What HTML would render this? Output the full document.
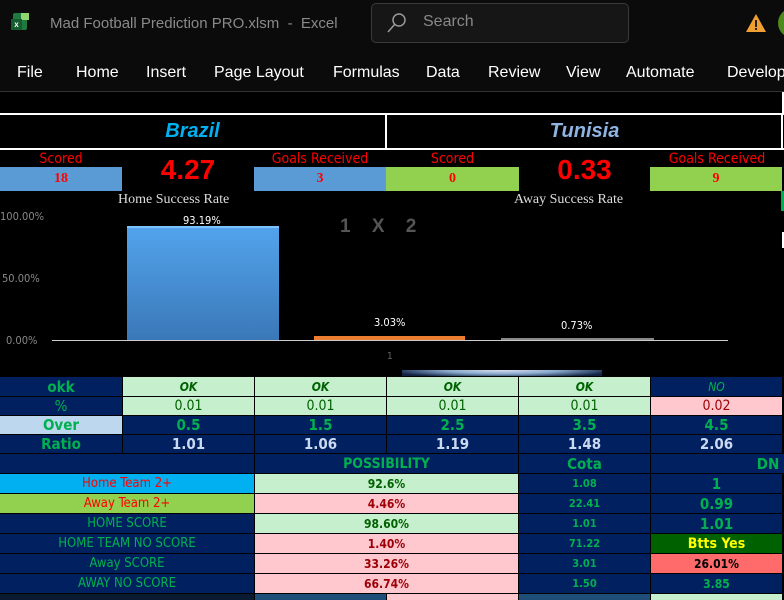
<!DOCTYPE html>
<html><head><style>
*{margin:0;padding:0;box-sizing:border-box}
body{width:784px;height:600px;background:#000;position:relative;overflow:hidden;font-family:"Liberation Sans",sans-serif}
.a{position:absolute}
.c{position:absolute;display:flex;align-items:center;justify-content:center;white-space:nowrap}
.n{font-family:"DejaVu Sans Condensed","Liberation Sans",sans-serif;font-stretch:condensed}
</style></head><body>
<div class="a" style="left:0;top:0;width:784px;height:92px;background:#0b0b0b"></div>
<div class="a" style="left:13px;top:13px;width:14px;height:17px;background:#1e7a3e;border-radius:2px"></div>
<div class="a" style="left:21px;top:13px;width:8px;height:7px;background:#8fd46e"></div>
<div class="c" style="left:11px;top:19px;width:11px;height:11px;background:#155c2e;color:#fff;font-size:8px;font-weight:bold">x</div>
<div class="a" style="left:50px;top:15px;color:#8a8a8a;font-size:15px">Mad Football Prediction PRO.xlsm&nbsp; - &nbsp;Excel</div>
<div class="a" style="left:371px;top:3px;width:258px;height:40px;border:1px solid #3a3a3a;border-radius:5px;background:#161616"></div>
<svg class="a" style="left:385px;top:11px" width="24" height="24" viewBox="0 0 24 24"><circle cx="14" cy="9" r="6" fill="none" stroke="#999" stroke-width="1.5"/><line x1="10" y1="13" x2="3" y2="21" stroke="#999" stroke-width="1.5"/></svg>
<div class="a" style="left:423px;top:13px;color:#888;font-size:16px">Search</div>
<svg class="a" style="left:745px;top:12px" width="22" height="22" viewBox="0 0 22 22"><path d="M11 2 L21 20 H1 Z" fill="#f0a030"/><rect x="10" y="8" width="2" height="7" fill="#222"/><rect x="10" y="16" width="2" height="2" fill="#222"/></svg>
<div class="a" style="left:778px;top:8px;width:30px;height:30px;border-radius:50%;background:#4e8a1e"></div>
<div class="a" style="top:64px;left:17px;color:#fff;font-size:16px">File</div>
<div class="a" style="top:64px;left:76px;color:#fff;font-size:16px">Home</div>
<div class="a" style="top:64px;left:146px;color:#fff;font-size:16px">Insert</div>
<div class="a" style="top:64px;left:214px;color:#fff;font-size:16px">Page Layout</div>
<div class="a" style="top:64px;left:333px;color:#fff;font-size:16px">Formulas</div>
<div class="a" style="top:64px;left:426px;color:#fff;font-size:16px">Data</div>
<div class="a" style="top:64px;left:488px;color:#fff;font-size:16px">Review</div>
<div class="a" style="top:64px;left:566px;color:#fff;font-size:16px">View</div>
<div class="a" style="top:64px;left:626px;color:#fff;font-size:16px">Automate</div>
<div class="a" style="top:64px;left:727px;color:#fff;font-size:16px">Develop</div>
<div class="a" style="left:0;top:91px;width:784px;height:1px;background:#333"></div>
<div class="a" style="left:782px;top:92px;width:2px;height:22px;background:#fff"></div>
<div class="a" style="left:0;top:113px;width:784px;height:2px;background:#fff"></div>
<div class="a" style="left:0;top:148px;width:784px;height:2px;background:#fff"></div>
<div class="a" style="left:385px;top:113px;width:2px;height:36px;background:#fff"></div>
<div class="a" style="left:781px;top:113px;width:2px;height:36px;background:#fff"></div>
<div class="c" style="left:0;top:115px;width:385px;height:33px;color:#00b0f0;font-size:20px;font-weight:bold;font-style:italic">Brazil</div>
<div class="c" style="left:387px;top:115px;width:395px;height:33px;color:#8db4e2;font-size:20px;font-weight:bold;font-style:italic">Tunisia</div>
<div class="c n" style="left:0;top:150px;width:122px;height:17px;color:#f00;font-size:14px">Scored</div>
<div class="c n" style="left:254px;top:150px;width:132px;height:17px;color:#f00;font-size:14px">Goals Received</div>
<div class="c n" style="left:386px;top:150px;width:133px;height:17px;color:#f00;font-size:14px">Scored</div>
<div class="c n" style="left:650px;top:150px;width:134px;height:17px;color:#f00;font-size:14px">Goals Received</div>
<div class="c" style="left:0;top:167px;width:122px;height:24px;background:#5b9bd5;color:#f00;font-size:14px;font-family:'Liberation Serif',serif;font-weight:bold">18</div>
<div class="c" style="left:254px;top:167px;width:132px;height:24px;background:#5b9bd5;color:#f00;font-size:14px;font-family:'Liberation Serif',serif;font-weight:bold">3</div>
<div class="c" style="left:386px;top:167px;width:133px;height:24px;background:#92d050;color:#f00;font-size:14px;font-family:'Liberation Serif',serif;font-weight:bold">0</div>
<div class="c" style="left:650px;top:167px;width:132px;height:24px;background:#92d050;color:#f00;font-size:14px;font-family:'Liberation Serif',serif;font-weight:bold">9</div>
<div class="c" style="left:122px;top:154px;width:132px;height:32px;color:#f00;font-size:28px;font-weight:bold">4.27</div>
<div class="c" style="left:519px;top:154px;width:131px;height:32px;color:#f00;font-size:28px;font-weight:bold">0.33</div>
<div class="a" style="left:781px;top:191px;width:3px;height:20px;background:#00b050"></div>
<div class="a" style="left:118px;top:192px;color:#ddd;font-size:14px;font-family:'Liberation Serif',serif">Home Success Rate</div>
<div class="a" style="left:514px;top:192px;width:138px;overflow:hidden;white-space:nowrap;color:#ddd;font-size:14px;font-family:'Liberation Serif',serif">Away Success Rate</div>
<div class="a n" style="left:0;top:210px;color:#888;font-size:11px">100.00%</div>
<div class="a n" style="left:2px;top:272px;color:#888;font-size:11px">50.00%</div>
<div class="a n" style="left:6px;top:334px;color:#888;font-size:11px">0.00%</div>
<div class="a n" style="left:183px;top:214px;color:#fff;font-size:11px">93.19%</div>
<div class="a" style="left:127px;top:226px;width:152px;height:114px;background:linear-gradient(#52a3ec,#3a78b8);border-top:2px solid #7cc4ff"></div>
<div class="a" style="left:340px;top:216px;color:#555;font-size:19px;font-weight:bold;letter-spacing:1px;word-spacing:14px">1 X 2</div>
<div class="a n" style="left:374px;top:316px;color:#fff;font-size:11px">3.03%</div>
<div class="a" style="left:314px;top:336px;width:151px;height:4px;background:#ed7d31"></div>
<div class="a n" style="left:561px;top:319px;color:#fff;font-size:11px">0.73%</div>
<div class="a" style="left:501px;top:338px;width:153px;height:2px;background:#888"></div>
<div class="a" style="left:52px;top:340px;width:676px;height:1px;background:#ccc"></div>
<div class="a n" style="left:387px;top:351px;color:#666;font-size:10px">1</div>
<div class="a" style="left:402px;top:370px;width:200px;height:7px;background:radial-gradient(ellipse at center top,#dde 0%,#8ac 40%,#124 80%)"></div>
<div class="a" style="left:782px;top:232px;width:2px;height:16px;background:#fff"></div>
<div class="a" style="left:0;top:376px;width:784px;height:224px;background:#000"></div>
<div id="t"></div>
<script>
var X=[0,123,255,387,519,651,783],Y=[377,397,416,435,454,474,494,514,534,554,574,594];
var h='';
function cell(c1,c2,r,bg,col,txt,fs,extra){var x=X[c1],w=X[c2]-X[c1]-1,y=Y[r],ht=Y[r+1]-Y[r]-1;
h+='<div class="c n" style="left:'+x+'px;top:'+y+'px;width:'+w+'px;height:'+ht+'px;background:'+bg+';color:'+col+';font-size:'+fs+'px;'+(extra||'')+'">'+txt+'</div>';}
var NV='#002060',GR='#00b050',LG='#c6efce',PK='#ffc7ce',DG='#006100',DR='#9c0006';
cell(0,1,0,NV,GR,'okk',15,'font-weight:bold');
for(var i=1;i<5;i++)cell(i,i+1,0,LG,DG,'OK',12,'font-style:italic;font-weight:bold');
cell(5,6,0,NV,GR,'NO',12,'font-style:italic');
cell(0,1,1,NV,GR,'%',15);
for(i=1;i<5;i++)cell(i,i+1,1,LG,DG,'0.01',14);
cell(5,6,1,PK,DR,'0.02',14);
cell(0,1,2,'#bdd7ee',GR,'Over',15,'font-weight:bold');
var ov=['0.5','1.5','2.5','3.5','4.5'];for(i=1;i<6;i++)cell(i,i+1,2,NV,GR,ov[i-1],15,'font-weight:bold');
cell(0,1,3,NV,GR,'Ratio',15,'font-weight:bold');
var ra=['1.01','1.06','1.19','1.48','2.06'];for(i=1;i<6;i++)cell(i,i+1,3,NV,'#c9d9f0',ra[i-1],15,'font-weight:bold');
cell(0,2,4,NV,GR,'',14);cell(2,4,4,NV,GR,'POSSIBILITY',14,'font-weight:bold');cell(4,5,4,NV,GR,'Cota',15,'font-weight:bold');
h+='<div class="c n" style="left:651px;top:454px;width:133px;height:19px;background:'+NV+';color:'+GR+';font-size:15px;font-weight:bold;justify-content:flex-end">DN&nbsp;</div>';
var L=[['Home Team 2+','#00b0f0','#f00'],['Away Team 2+','#92d050','#f00'],['HOME SCORE',NV,GR],['HOME TEAM NO SCORE',NV,GR],['Away SCORE',NV,GR],['AWAY NO SCORE',NV,GR]];
var P=[['92.6%',LG,DG],['4.46%',PK,DR],['98.60%',LG,DG],['1.40%',PK,DR],['33.26%',PK,DR],['66.74%',PK,DR]];
var C=['1.08','22.41','1.01','71.22','3.01','1.50'];
var D=[['1',NV,GR,15],['0.99',NV,GR,15],['1.01',NV,GR,15],['Btts Yes','#006100','#ff0',14],['26.01%','#ff6b6b','#000',12],['3.85',NV,GR,12]];
for(i=0;i<6;i++){cell(0,2,5+i,L[i][1],L[i][2],L[i][0],13);cell(2,4,5+i,P[i][1],P[i][2],P[i][0],12,'font-weight:bold');
cell(4,5,5+i,NV,GR,C[i],11,'font-weight:bold');cell(5,6,5+i,D[i][1],D[i][2],D[i][0],D[i][3],'font-weight:bold');}
h+='<div class="a" style="left:255px;top:594px;width:131px;height:6px;background:#1f4e79"></div><div class="a" style="left:387px;top:594px;width:131px;height:6px;background:#ffc7ce"></div><div class="a" style="left:519px;top:594px;width:131px;height:6px;background:#1f4e79"></div><div class="a" style="left:651px;top:594px;width:131px;height:6px;background:#c6efce"></div><div class="a" style="left:0;top:594px;width:254px;height:6px;background:#0a1a30"></div>';
document.getElementById('t').innerHTML=h;
</script>
</body></html>
